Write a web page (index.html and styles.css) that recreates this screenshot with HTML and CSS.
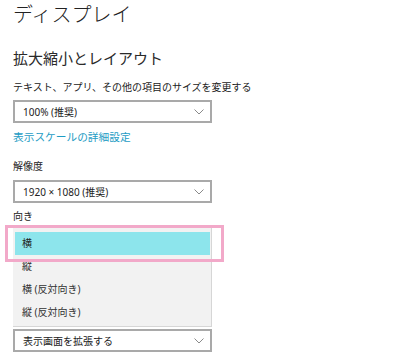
FILE: index.html
```html
<!DOCTYPE html>
<html lang="ja">
<head>
<meta charset="utf-8">
<link rel="stylesheet" href="styles.css">
</head>
<body>
<div class="page">
  <div class="title">ディスプレイ</div>
  <div class="heading">拡大縮小とレイアウト</div>
  <div class="label l1">テキスト、アプリ、その他の項目のサイズを変更する</div>
  <div class="select s1"><span>100% (推奨)</span><svg class="chev" width="10" height="6" viewBox="0 0 10 6"><path d="M0.5 0.5 L5 5 L9.5 0.5" fill="none" stroke="#8a8a8a" stroke-width="1"/></svg></div>
  <div class="link">表示スケールの詳細設定</div>
  <div class="label l2">解像度</div>
  <div class="select s2"><span>1920 × 1080 (推奨)</span><svg class="chev" width="10" height="6" viewBox="0 0 10 6"><path d="M0.5 0.5 L5 5 L9.5 0.5" fill="none" stroke="#8a8a8a" stroke-width="1"/></svg></div>
  <div class="label l3">向き</div>
  <div class="menuwrap">
    <ul class="menu">
      <li class="sel">横</li>
      <li>縦</li>
      <li>横 (反対向き)</li>
      <li>縦 (反対向き)</li>
    </ul>
    <div class="highlight"></div>
  </div>
  <div class="select s3"><span>表示画面を拡張する</span><svg class="chev" width="10" height="6" viewBox="0 0 10 6"><path d="M0.5 0.5 L5 5 L9.5 0.5" fill="none" stroke="#8a8a8a" stroke-width="1"/></svg></div>
</div>
</body>
</html>
```
FILE: styles.css
```css
html, body {
  margin: 0;
  padding: 0;
  background: #ffffff;
}
body {
  width: 400px;
  height: 356px;
  overflow: hidden;
  font-family: "Noto Sans", "Noto Sans CJK JP", sans-serif;
  color: #1a1a1a;
}
.page {
  padding-left: 13px;
  width: 199px;
}
.title {
  font-size: 20px;
  line-height: 30px;
  height: 30px;
  font-weight: 300;
  color: #222;
}
.heading {
  margin-top: 18px;
  font-size: 15px;
  line-height: 20px;
  color: #2a2a2a;
}
.label {
  font-size: 10px;
  line-height: 16px;
  white-space: nowrap;
  color: #222;
}
.l1 { margin-top: 11px; }
.l2 { margin-top: 13px; }
.l3 { margin-top: 5px; }
.select {
  box-sizing: border-box;
  height: 23px;
  border: 2px solid #a9a9a9;
  display: flex;
  align-items: center;
  justify-content: space-between;
  padding: 0 6px 0 8px;
  font-size: 10px;
  color: #222;
  background: #fff;
}
.s1 { margin-top: 5px; }
.s2 { margin-top: 6px; }
.s3 { margin-top: 2px; }
.chev { display: block; }
.link {
  margin-top: 6px;
  font-size: 10.7px;
  line-height: 16px;
  color: #1e9cc4;
}
.menuwrap {
  position: relative;
  margin-top: 3px;
}
.menu {
  list-style: none;
  margin: 0;
  padding: 5px 1px 2px 2px;
  background: #f2f2f2;
  border-right: 1px solid #d6d6d6;
  border-bottom: 1px solid #d6d6d6;
  height: 92px;
}
.menu li {
  height: 23px;
  line-height: 23px;
  padding-left: 7px;
  font-size: 10px;
  color: #333;
}
.menu li.sel {
  background: #8de5ec;
  color: #222;
}
.highlight {
  position: absolute;
  left: -8px;
  top: -2px;
  width: 213px;
  height: 31px;
  border: 3px solid #f2a9c9;
}
```
